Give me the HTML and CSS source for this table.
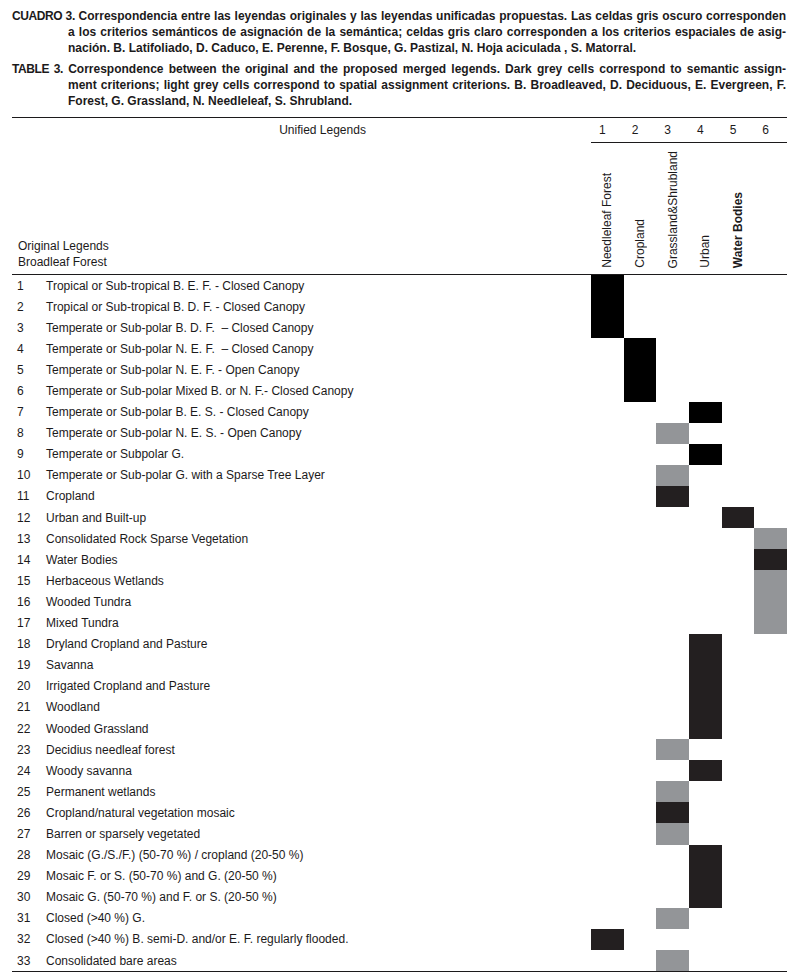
FILE: index.html
```html
<!DOCTYPE html>
<html lang="es">
<head>
<meta charset="utf-8">
<title>Cuadro 3</title>
<link rel="stylesheet" href="styles.css">
</head>
<body>
<div class="captions">
  <p class="cap">
    <span class="ln first"><span class="cap-label">CUADRO 3.</span> Correspondencia entre las leyendas originales y las leyendas unificadas propuestas. Las celdas gris oscuro corresponden</span>
    <span class="ln">a los criterios semánticos de asignación de la semántica; celdas gris claro corresponden a los criterios espaciales de asig-</span>
    <span class="ln last">nación. B. Latifoliado, D. Caduco, E. Perenne, F. Bosque, G. Pastizal, N. Hoja aciculada , S. Matorral.</span>
  </p>
  <p class="cap">
    <span class="ln first"><span class="cap-label">TABLE 3.</span> Correspondence between the original and the proposed merged legends. Dark grey cells correspond to semantic assign-</span>
    <span class="ln">ment criterions; light grey cells correspond to spatial assignment criterions. B. Broadleaved, D. Deciduous, E. Evergreen, F.</span>
    <span class="ln last">Forest, G. Grassland, N. Needleleaf, S. Shrubland.</span>
  </p>
</div>

<table class="legend-table">
  <colgroup>
    <col class="c-num"><col class="c-name">
    <col class="c-u"><col class="c-u"><col class="c-u"><col class="c-u"><col class="c-u"><col class="c-u">
  </colgroup>
  <thead>
    <tr class="h1">
      <th colspan="2" class="unified">Unified Legends</th>
      <th class="num">1</th><th class="num">2</th><th class="num">3</th><th class="num">4</th><th class="num">5</th><th class="num">6</th>
    </tr>
    <tr class="h2">
      <th colspan="2" class="orig">Original Legends<br>Broadleaf Forest</th>
      <th class="vert"><span>Needleleaf Forest</span></th>
      <th class="vert"><span>Cropland</span></th>
      <th class="vert"><span>Grassland&amp;Shrubland</span></th>
      <th class="vert"><span>Urban</span></th>
      <th class="vert bold"><span>Water Bodies</span></th>
      <th class="vert"></th>
    </tr>
  </thead>
  <tbody>
    <tr><td class="n">1</td><td class="t">Tropical or Sub-tropical B. E. F. - Closed Canopy</td><td class="k"></td><td></td><td></td><td></td><td></td><td></td></tr>
    <tr><td class="n">2</td><td class="t">Tropical or Sub-tropical B. D. F. - Closed Canopy</td><td class="k"></td><td></td><td></td><td></td><td></td><td></td></tr>
    <tr><td class="n">3</td><td class="t">Temperate or Sub-polar B. D. F. &nbsp;– Closed Canopy</td><td class="k"></td><td></td><td></td><td></td><td></td><td></td></tr>
    <tr><td class="n">4</td><td class="t">Temperate or Sub-polar N. E. F. &nbsp;– Closed Canopy</td><td></td><td class="k"></td><td></td><td></td><td></td><td></td></tr>
    <tr><td class="n">5</td><td class="t">Temperate or Sub-polar N. E. F. - Open Canopy</td><td></td><td class="k"></td><td></td><td></td><td></td><td></td></tr>
    <tr><td class="n">6</td><td class="t">Temperate or Sub-polar Mixed B. or N. F.- Closed Canopy</td><td></td><td class="k"></td><td></td><td></td><td></td><td></td></tr>
    <tr><td class="n">7</td><td class="t">Temperate or Sub-polar B. E. S. - Closed Canopy</td><td></td><td></td><td></td><td class="k"></td><td></td><td></td></tr>
    <tr><td class="n">8</td><td class="t">Temperate or Sub-polar N. E. S. - Open Canopy</td><td></td><td></td><td class="g"></td><td></td><td></td><td></td></tr>
    <tr><td class="n">9</td><td class="t">Temperate or Subpolar G.</td><td></td><td></td><td></td><td class="k"></td><td></td><td></td></tr>
    <tr><td class="n">10</td><td class="t">Temperate or Sub-polar G. with a Sparse Tree Layer</td><td></td><td></td><td class="g"></td><td></td><td></td><td></td></tr>
    <tr><td class="n">11</td><td class="t">Cropland</td><td></td><td></td><td class="d"></td><td></td><td></td><td></td></tr>
    <tr><td class="n">12</td><td class="t">Urban and Built-up</td><td></td><td></td><td></td><td></td><td class="d"></td><td></td></tr>
    <tr><td class="n">13</td><td class="t">Consolidated Rock Sparse Vegetation</td><td></td><td></td><td></td><td></td><td></td><td class="g"></td></tr>
    <tr><td class="n">14</td><td class="t">Water Bodies</td><td></td><td></td><td></td><td></td><td></td><td class="d"></td></tr>
    <tr><td class="n">15</td><td class="t">Herbaceous Wetlands</td><td></td><td></td><td></td><td></td><td></td><td class="g"></td></tr>
    <tr><td class="n">16</td><td class="t">Wooded Tundra</td><td></td><td></td><td></td><td></td><td></td><td class="g"></td></tr>
    <tr><td class="n">17</td><td class="t">Mixed Tundra</td><td></td><td></td><td></td><td></td><td></td><td class="g"></td></tr>
    <tr><td class="n">18</td><td class="t">Dryland Cropland and Pasture</td><td></td><td></td><td></td><td class="d"></td><td></td><td></td></tr>
    <tr><td class="n">19</td><td class="t">Savanna</td><td></td><td></td><td></td><td class="d"></td><td></td><td></td></tr>
    <tr><td class="n">20</td><td class="t">Irrigated Cropland and Pasture</td><td></td><td></td><td></td><td class="d"></td><td></td><td></td></tr>
    <tr><td class="n">21</td><td class="t">Woodland</td><td></td><td></td><td></td><td class="d"></td><td></td><td></td></tr>
    <tr><td class="n">22</td><td class="t">Wooded Grassland</td><td></td><td></td><td></td><td class="d"></td><td></td><td></td></tr>
    <tr><td class="n">23</td><td class="t">Decidius needleaf forest</td><td></td><td></td><td class="g"></td><td></td><td></td><td></td></tr>
    <tr><td class="n">24</td><td class="t">Woody savanna</td><td></td><td></td><td></td><td class="d"></td><td></td><td></td></tr>
    <tr><td class="n">25</td><td class="t">Permanent wetlands</td><td></td><td></td><td class="g"></td><td></td><td></td><td></td></tr>
    <tr><td class="n">26</td><td class="t">Cropland/natural vegetation mosaic</td><td></td><td></td><td class="d"></td><td></td><td></td><td></td></tr>
    <tr><td class="n">27</td><td class="t">Barren or sparsely vegetated</td><td></td><td></td><td class="g"></td><td></td><td></td><td></td></tr>
    <tr><td class="n">28</td><td class="t">Mosaic (G./S./F.) (50-70 %) / cropland (20-50 %)</td><td></td><td></td><td></td><td class="d"></td><td></td><td></td></tr>
    <tr><td class="n">29</td><td class="t">Mosaic F. or S. (50-70 %) and G. (20-50 %)</td><td></td><td></td><td></td><td class="d"></td><td></td><td></td></tr>
    <tr><td class="n">30</td><td class="t">Mosaic G. (50-70 %) and F. or S. (20-50 %)</td><td></td><td></td><td></td><td class="d"></td><td></td><td></td></tr>
    <tr><td class="n">31</td><td class="t">Closed (&gt;40 %) G.</td><td></td><td></td><td class="g"></td><td></td><td></td><td></td></tr>
    <tr><td class="n">32</td><td class="t">Closed (&gt;40 %) B. semi-D. and/or E. F. regularly flooded.</td><td class="d"></td><td></td><td></td><td></td><td></td><td></td></tr>
    <tr><td class="n">33</td><td class="t">Consolidated bare areas</td><td></td><td></td><td class="g"></td><td></td><td></td><td></td></tr>
  </tbody>
</table>
</body>
</html>
```

FILE: styles.css
```css
html, body {
  margin: 0;
  padding: 0;
  background: #ffffff;
}

body {
  font-family: "Liberation Sans", Arial, sans-serif;
  color: #1c1a1b;
  width: 798px;
}

.captions {
  padding: 8px 12px 0 12px;
  display: flex;
  flex-direction: column;
  gap: 5px;
}

.cap {
  margin: 0;
  padding-left: 56px;
  font-size: 12px;
  font-weight: bold;
  line-height: 16px;
}

.ln {
  display: block;
  text-align: justify;
  text-align-last: justify;
  white-space: nowrap;
}

.ln.first {
  margin-left: -56px;
}

.cap-label {
  letter-spacing: -0.4px;
}

.ln.last {
  text-align-last: left;
}

.legend-table {
  margin: 8px 0 0 12px;
  width: 775px;
  border-collapse: collapse;
  table-layout: fixed;
  font-size: 12px;
  border-top: 1px solid #1c1a1b;
  border-bottom: 1px solid #1c1a1b;
}

.c-num { width: 34px; }
.c-name { width: 545px; }
.c-u { width: 32.66px; }

th, td {
  padding: 0;
  font-weight: normal;
}

.h1 th {
  height: 24px;
  vertical-align: middle;
}

.unified {
  text-align: center;
  padding-left: 42px;
}

.num {
  text-align: left;
  padding-left: 8px;
  border-bottom: 1px solid #1c1a1b;
}

.h2 th {
  height: 125px;
  vertical-align: bottom;
  border-bottom: 1px solid #1c1a1b;
}

.orig {
  text-align: left;
  padding: 0 0 4px 6px;
  line-height: 16px;
}

.vert {
  text-align: center;
  padding-bottom: 6px;
  line-height: 0;
}

.vert span {
  display: inline-block;
  vertical-align: bottom;
  writing-mode: vertical-rl;
  transform: rotate(180deg);
  line-height: 14px;
  white-space: nowrap;
}

.vert.bold span {
  font-weight: bold;
}

tbody td {
  height: 21.1px;
  vertical-align: middle;
  line-height: 14px;
}

td.n {
  padding-left: 5px;
}

td.t {
  white-space: nowrap;
}

td.k { background: #000000; }
td.d { background: #231f20; }
td.g { background: #939598; }
```
